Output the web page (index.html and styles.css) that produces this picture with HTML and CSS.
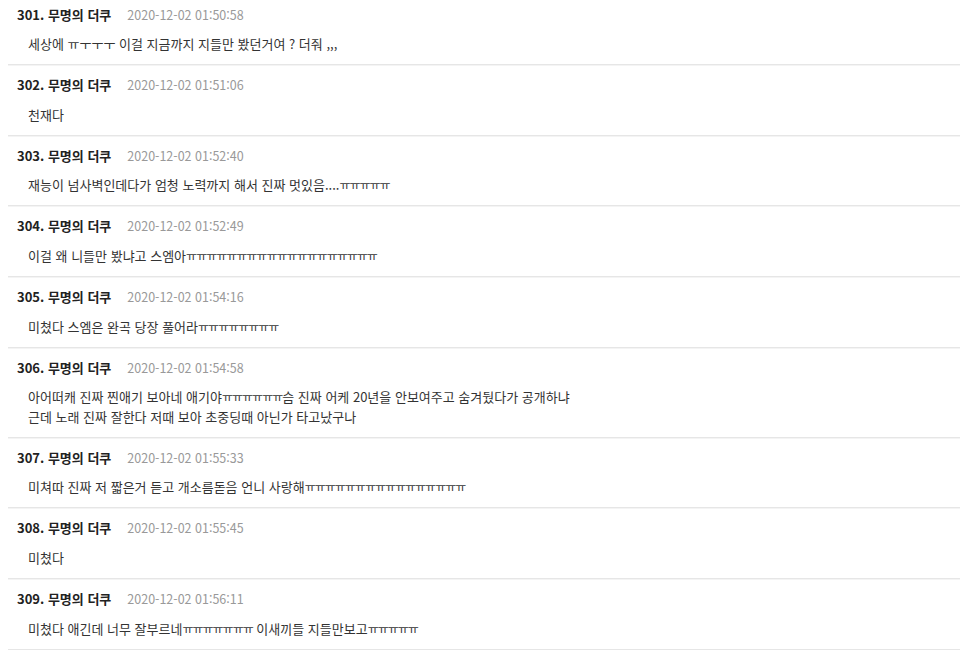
FILE: index.html
```html
<!DOCTYPE html>
<html lang="ko">
<head>
<meta charset="utf-8">
<link rel="stylesheet" href="styles.css">
</head>
<body>
<ul class="list">
  <li class="item first">
    <div class="head"><span class="name">301. 무명의 더쿠</span><span class="date">2020-12-02 01:50:58</span></div>
    <div class="text">세상에 ㅠㅜㅜㅜ 이걸 지금까지 지들만 봤던거여 ? 더줘 ,,,</div>
  </li>
  <li class="item">
    <div class="head"><span class="name">302. 무명의 더쿠</span><span class="date">2020-12-02 01:51:06</span></div>
    <div class="text">천재다</div>
  </li>
  <li class="item">
    <div class="head"><span class="name">303. 무명의 더쿠</span><span class="date">2020-12-02 01:52:40</span></div>
    <div class="text">재능이 넘사벽인데다가 엄청 노력까지 해서 진짜 멋있음....<span class="jamo">ㅠㅠㅠㅠㅠ</span></div>
  </li>
  <li class="item">
    <div class="head"><span class="name">304. 무명의 더쿠</span><span class="date">2020-12-02 01:52:49</span></div>
    <div class="text">이걸 왜 니들만 봤냐고 스엠아<span class="jamo">ㅠㅠㅠㅠㅠㅠㅠㅠㅠㅠㅠㅠㅠㅠㅠㅠㅠㅠㅠ</span></div>
  </li>
  <li class="item">
    <div class="head"><span class="name">305. 무명의 더쿠</span><span class="date">2020-12-02 01:54:16</span></div>
    <div class="text">미쳤다 스엠은 완곡 당장 풀어라<span class="jamo">ㅠㅠㅠㅠㅠㅠㅠㅠ</span></div>
  </li>
  <li class="item">
    <div class="head"><span class="name">306. 무명의 더쿠</span><span class="date">2020-12-02 01:54:58</span></div>
    <div class="text">아어떠캐 진짜 찐애기 보아네 애기야<span class="jamo">ㅠㅠㅠㅠㅠㅠ</span>슴 진짜 어케 20년을 안보여주고 숨겨뒀다가 공개하냐<br>근데 노래 진짜 잘한다 저때 보아 초중딩때 아닌가 타고났구나</div>
  </li>
  <li class="item">
    <div class="head"><span class="name">307. 무명의 더쿠</span><span class="date">2020-12-02 01:55:33</span></div>
    <div class="text">미쳐따 진짜 저 짧은거 듣고 개소름돋음 언니 사랑해<span class="jamo">ㅠㅠㅠㅠㅠㅠㅠㅠㅠㅠㅠㅠㅠㅠㅠㅠ</span></div>
  </li>
  <li class="item">
    <div class="head"><span class="name">308. 무명의 더쿠</span><span class="date">2020-12-02 01:55:45</span></div>
    <div class="text">미쳤다</div>
  </li>
  <li class="item">
    <div class="head"><span class="name">309. 무명의 더쿠</span><span class="date">2020-12-02 01:56:11</span></div>
    <div class="text">미쳤다 애긴데 너무 잘부르네<span class="jamo">ㅠㅠㅠㅠㅠㅠㅠ</span> 이새끼들 지들만보고<span class="jamo">ㅠㅠㅠㅠㅠ</span></div>
  </li>
</ul>
</body>
</html>
```
FILE: styles.css
```css
html, body {
  margin: 0;
  padding: 0;
  background: #ffffff;
}
body {
  font-family: "Noto Sans CJK KR", "Noto Sans", sans-serif;
  font-size: 13px;
  color: #333333;
  overflow: hidden;
}
.list {
  list-style: none;
  margin: 0 0 0 8px;
  padding: 0;
}
.item {
  padding: 10px 0 10.625px;
  border-bottom: 1px solid #e6e6e6;
  box-shadow: 0 1px 0 #f4f4f4;
}
.item.first {
  margin-top: -5.5px;
}
.head {
  padding-left: 9px;
  line-height: 19.5px;
  display: flex;
  align-items: baseline;
}
.name {
  font-weight: bold;
  color: #222222;
  font-size: 13px;
}
.date {
  margin-left: 16px;
  color: #999999;
  font-size: 12.5px;
}
.text {
  margin-top: 10px;
  padding-left: 20px;
  line-height: 19.5px;
  color: #333333;
}
.jamo {
  font-size: 12px;
  letter-spacing: -1px;
}
```
